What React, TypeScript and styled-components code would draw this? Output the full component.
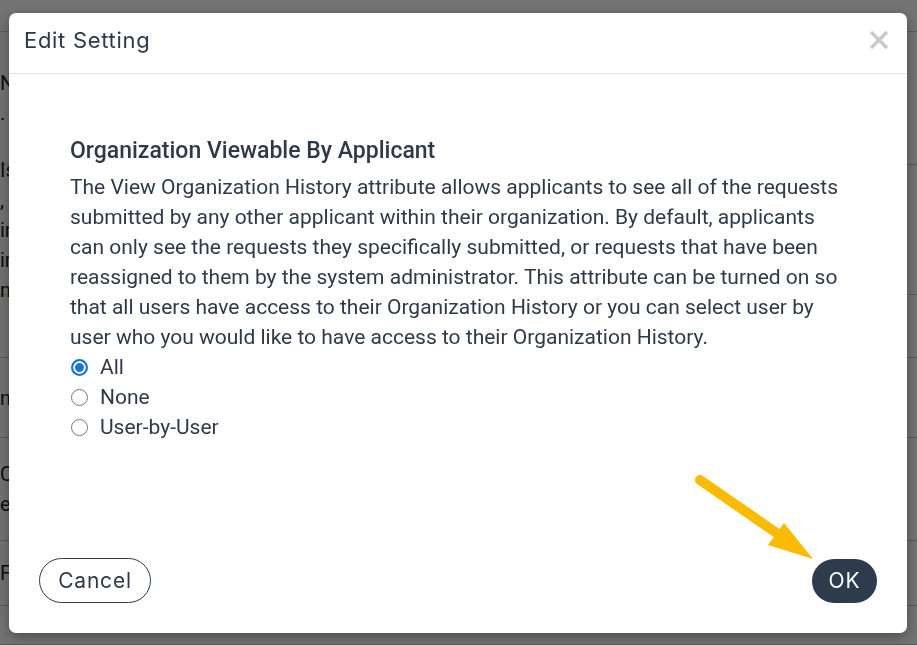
import React, { FC, useState } from 'react';
import styled, { createGlobalStyle } from 'styled-components';

type Option = {
  value: string;
  label: string;
};

const OPTIONS: Option[] = [
  { value: 'all', label: 'All' },
  { value: 'none', label: 'None' },
  { value: 'user', label: 'User-by-User' },
];

// rows of the settings table that sits behind the dialog
const ROWS: { height: number; lines: string[] }[] = [
  { height: 32, lines: [] },
  { height: 133, lines: ['Name', '.'] },
  { height: 130, lines: ['Is', ', a', 'ir', 'ir', 'n'] },
  { height: 63, lines: [] },
  { height: 80, lines: ['m'] },
  { height: 103, lines: ['C', 'e'] },
  { height: 65, lines: ['F'] },
  { height: 39, lines: [] },
];

const App: FC = () => {
  const [choice, setChoice] = useState('all');

  return (
    <>
      <GlobalStyle />
      <Page>
        {ROWS.map((row, index) => (
          <PageRow key={index} style={{ height: row.height }}>
            {row.lines.map((line, i) => (
              <PageText key={i}>{line}</PageText>
            ))}
          </PageRow>
        ))}
      </Page>
      <Overlay>
        <Dialog role="dialog" aria-labelledby="edit-setting-title">
          <Header>
            <Title id="edit-setting-title">Edit Setting</Title>
            <CloseButton aria-label="Close">
              <svg width="20" height="20" viewBox="0 0 20 20">
                <path d="M2 2 L18 18 M18 2 L2 18" stroke="currentColor" strokeWidth="3.2" />
              </svg>
            </CloseButton>
          </Header>
          <Body>
            <SettingName>Organization Viewable By Applicant</SettingName>
            <Description>
              The View Organization History attribute allows applicants to see all of the requests
              submitted by any other applicant within their organization. By default, applicants
              can only see the requests they specifically submitted, or requests that have been
              reassigned to them by the system administrator. This attribute can be turned on so
              that all users have access to their Organization History or you can select user by
              user who you would like to have access to their Organization History.
            </Description>
            <Choices>
              {OPTIONS.map(({ value, label }) => (
                <Choice key={value}>
                  <Radio
                    type="radio"
                    name="org-viewable"
                    value={value}
                    checked={choice === value}
                    onChange={() => setChoice(value)}
                  />
                  {label}
                </Choice>
              ))}
            </Choices>
          </Body>
          <Footer>
            <CancelButton>Cancel</CancelButton>
            <OkButton>OK</OkButton>
          </Footer>
          <Pointer width="135" height="100" viewBox="0 0 135 100">
            <path d="M18 18 L96 72" stroke="#fbbb00" strokeWidth="10" strokeLinecap="round" />
            <polygon points="102,61 86,83 131,97" fill="#fbbb00" />
          </Pointer>
        </Dialog>
      </Overlay>
    </>
  );
};

const GlobalStyle = createGlobalStyle`
  html, body {
    margin: 0;
    padding: 0;
    height: 100%;
    overflow: hidden;
  }
  body {
    font-family: Roboto, "Liberation Sans", sans-serif;
    background: #ffffff;
  }
`;

const Page = styled.div`
  display: flex;
  flex-direction: column;
  height: 645px;
  overflow: hidden;
  background: #ffffff;
`;

const PageRow = styled.div`
  display: flex;
  flex-direction: column;
  justify-content: center;
  align-items: flex-start;
  border-bottom: 1px solid #c8c8c8;
  box-sizing: border-box;
`;

const PageText = styled.div`
  font-size: 20px;
  line-height: 30px;
  color: #1c1c1c;
  white-space: nowrap;
`;

const Overlay = styled.div`
  position: fixed;
  inset: 0;
  background: rgba(0, 0, 0, 0.55);
`;

const Dialog = styled.div`
  position: absolute;
  left: 9px;
  top: 13px;
  width: 898px;
  height: 620px;
  display: flex;
  flex-direction: column;
  background: #ffffff;
  border-radius: 7px;
  box-shadow: 0 4px 14px rgba(0, 0, 0, 0.35);
  color: #2e3a4b;
`;

const Header = styled.div`
  display: flex;
  align-items: center;
  justify-content: space-between;
  height: 61px;
  box-sizing: border-box;
  padding: 0 18px 6px 15px;
  border-bottom: 1px solid #e4e4e4;
`;

const Title = styled.h2`
  margin: 0;
  font-family: Inter, "Noto Sans", sans-serif;
  font-size: 22px;
  font-weight: 400;
  letter-spacing: 0.7px;
  color: #2e3a4b;
`;

const CloseButton = styled.button`
  display: flex;
  padding: 0;
  border: 0;
  background: none;
  color: #c9c9c9;
  cursor: pointer;
`;

const Body = styled.div`
  display: flex;
  flex-direction: column;
  padding: 62px 60px 0 61px;
`;

const SettingName = styled.h3`
  margin: 0;
  font-size: 23px;
  line-height: 30px;
  font-weight: 500;
  color: #2e3a4b;
`;

const Description = styled.p`
  margin: 6px 0 0;
  font-size: 21px;
  line-height: 30px;
  color: #2e3a4b;
`;

const Choices = styled.div`
  display: flex;
  flex-direction: column;
`;

const Choice = styled.label`
  display: flex;
  align-items: center;
  gap: 12px;
  height: 30px;
  font-size: 21px;
  color: #2e3a4b;
`;

const Radio = styled.input`
  appearance: none;
  box-sizing: border-box;
  width: 17px;
  height: 17px;
  margin: 0 0 0 1px;
  border: 1.5px solid #767676;
  border-radius: 50%;
  background: #ffffff;

  &:checked {
    border: 2px solid #1a76d2;
    box-shadow: inset 0 0 0 2px #ffffff;
    background: #1a76d2;
  }
`;

const Footer = styled.div`
  display: flex;
  align-items: center;
  justify-content: space-between;
  margin-top: auto;
  padding: 0 30px 30px;
`;

const PillButton = styled.button`
  font-family: Inter, "Noto Sans", sans-serif;
  font-size: 21px;
  letter-spacing: 0.8px;
  border-radius: 23px;
  cursor: pointer;
`;

const CancelButton = styled(PillButton)`
  width: 112px;
  height: 45px;
  border: 1px solid #2e3a4b;
  background: #ffffff;
  color: #2e3a4b;
`;

const OkButton = styled(PillButton)`
  width: 65px;
  height: 44px;
  border: 0;
  background: #2d3b4c;
  color: #ffffff;
`;

const Pointer = styled.svg`
  position: absolute;
  left: 673px;
  top: 449px;
  pointer-events: none;
`;

export default App;
